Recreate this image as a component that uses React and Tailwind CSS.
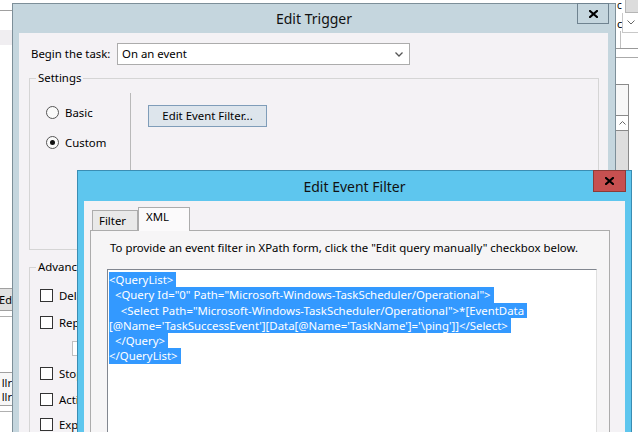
import React from "react";

/* ==========================================
   SMALL CONTROLS
========================================== */
function CloseX() {
  return (
    <svg width="9" height="8" viewBox="0 0 9 8">
      <path d="M1 1 L8 7 M8 1 L1 7" stroke="#000" strokeWidth="2.2" strokeLinecap="square" />
    </svg>
  );
}

function Radio({ checked, label }) {
  return (
    <div className="flex items-center h-[15px]">
      <span className="w-[13px] h-[13px] rounded-full border border-[#555] bg-[#fafafa] flex items-center justify-center">
        {checked && <span className="w-[5px] h-[5px] rounded-full bg-[#111]" />}
      </span>
      <span className="ml-[6px]">{label}</span>
    </div>
  );
}

function Check({ label }) {
  return (
    <div className="flex items-center h-[13px]">
      <span className="w-[13px] h-[13px] border border-[#333] bg-white shrink-0" />
      <span className="ml-[6px] whitespace-nowrap">{label}</span>
    </div>
  );
}

const xml = [
  "<QueryList>",
  "  <Query Id=\"0\" Path=\"Microsoft-Windows-TaskScheduler/Operational\">",
  "    <Select Path=\"Microsoft-Windows-TaskScheduler/Operational\">*[EventData",
  "[@Name='TaskSuccessEvent'][Data[@Name='TaskName']='\\ping']]</Select>",
  "  </Query>",
  "</QueryList>"
];

/* ==========================================
   BACKGROUND BITS (other windows behind)
========================================== */
function Backdrop() {
  return (
    <>
      {/* left strip */}
      <div className="absolute left-0 top-[10px] w-[12px] h-px bg-[#a0a0a0]" />
      <div className="absolute left-0 top-[30px] w-[12px] h-[15px] bg-[#f0eef1]" />
      <div className="absolute left-0 top-[288px] w-[12px] h-[23px] bg-[#e1e1e1] border-y border-[#a0a0a0] text-[11px] leading-[21px] overflow-hidden whitespace-nowrap flex justify-end">
        Ed
      </div>
      <div className="absolute left-0 top-[316px] w-[12px] h-px bg-[#b0b0b0]" />
      <div className="absolute left-0 top-[372px] w-[12px] h-[34px] border-y border-[#a0a0a0] bg-[#f7f7f7] text-[11px] leading-[14px] overflow-hidden flex flex-col items-end pt-[3px]">
        <span>llr</span>
        <span>llr</span>
      </div>
      <div className="absolute left-0 top-[411px] w-[12px] h-px bg-[#b0b0b0]" />

      {/* right strip */}
      <div className="absolute left-[625px] top-0 w-[13px] h-[13px] bg-[#dcdcdc] border-l border-b border-[#b5b5b5]" />
      <div className="absolute left-[617px] top-0 text-[10px] leading-[11px]">c</div>
      <div className="absolute left-[617px] top-[18px] text-[11px] leading-[12px]">c</div>
      <div className="absolute left-[622px] top-[13px] w-[16px] h-[20px] bg-white border-l border-b border-[#c8c8c8] flex items-center justify-center">
        <svg width="8" height="5" viewBox="0 0 8 5">
          <path d="M0.5 0.5 L4 4 L7.5 0.5" stroke="#666" fill="none" />
        </svg>
      </div>
      <div className="absolute left-[620px] top-[31px] w-px h-[17px] bg-[#c0c0c0]" />
      <div className="absolute left-[616px] top-[48px] w-[22px] h-px bg-[#999]" />
      <div className="absolute left-[616px] top-[57px] w-[22px] h-px bg-[#aaa]" />
      <div className="absolute left-[616px] top-[84px] w-[13px] h-[31px] border-t border-r border-[#8a8a8a] bg-[#f7f7f7]" />
      <div className="absolute left-[616px] top-[115px] w-[13px] h-[16px] border border-l-0 border-[#8a8a8a] bg-white flex items-center justify-center">
        <svg width="7" height="4" viewBox="0 0 7 4">
          <path d="M0.5 3.5 L3.5 0.5 L6.5 3.5" stroke="#666" fill="none" />
        </svg>
      </div>
      <div className="absolute left-[616px] top-[131px] w-[13px] h-[40px] border-r border-[#8a8a8a] bg-[#dedede]" />
    </>
  );
}

/* ==========================================
   EDIT TRIGGER WINDOW (inactive)
========================================== */
function EditTrigger() {
  return (
    <div className="absolute left-[12px] top-[3px] w-[604px] h-[470px] border border-[#7d8f99] bg-[#c5d6de]">
      <div className="relative h-[29px] flex items-center justify-center text-[14px] text-[#111]">
        Edit Trigger
        <div className="absolute top-[-1px] right-[6px] w-[32px] h-[21px] border border-[#6f8390] flex items-center justify-center">
          <CloseX />
        </div>
      </div>

      <div className="ml-[6px] w-[589px] h-[440px] bg-[#f4f2f5] pt-[10px]">
        <div className="flex items-center">
          <span className="pl-[12px] w-[98px]">Begin the task:</span>
          <div className="w-[293px] h-[22px] border border-[#acacac] bg-white flex items-center justify-between pl-[4px] pr-[6px]">
            <span>On an event</span>
            <svg width="8" height="5" viewBox="0 0 8 5">
              <path d="M0.5 0.5 L4 4 L7.5 0.5" stroke="#555" fill="none" strokeWidth="1.3" />
            </svg>
          </div>
        </div>

        {/* Settings group */}
        <div className="relative mt-[13px] ml-[10px] w-[570px] h-[172px] border border-[#d5d5d5]">
          <span className="absolute top-[-9px] left-[6px] px-[2px] bg-[#f4f2f5] leading-[15px]">Settings</span>
          <div className="flex">
            <div className="mt-[14px] w-[101px] h-[150px] border-r border-[#b9b9b9] pl-[16px] pt-[12px] flex flex-col gap-[15px]">
              <Radio label="Basic" />
              <Radio checked label="Custom" />
            </div>
            <div className="pl-[17px] pt-[26px]">
              <div className="w-[119px] h-[22px] bg-[#dde5ec] border border-[#7f9db9] flex items-center justify-center">
                Edit Event Filter...
              </div>
            </div>
          </div>
        </div>

        {/* Advanced settings group */}
        <div className="relative mt-[17px] ml-[10px] w-[570px] h-[200px] border border-[#d5d5d5]">
          <span className="absolute top-[-9px] left-[6px] px-[2px] bg-[#f4f2f5] leading-[15px]">Advanced settings</span>
          <div className="pl-[10px] pt-[21px] flex flex-col">
            <Check label="Delay task for up to (random delay):" />
            <div className="mt-[14px]">
              <Check label="Repeat task every:" />
            </div>
            <div className="mt-[12px] ml-[32px] w-[80px] h-[15px] border border-[#c0c0c0] bg-white" />
            <div className="mt-[11px]">
              <Check label="Stop task if it runs longer than:" />
            </div>
            <div className="mt-[13px]">
              <Check label="Activate:" />
            </div>
            <div className="mt-[12px]">
              <Check label="Expire:" />
            </div>
          </div>
        </div>
      </div>
    </div>
  );
}

/* ==========================================
   EDIT EVENT FILTER WINDOW (active)
========================================== */
function EditEventFilter() {
  return (
    <div className="absolute left-[77px] top-[170px] w-[555px] h-[300px] border border-[#3a8db3] bg-[#5ec6ee]">
      <div className="relative h-[30px] flex items-center justify-center text-[14px] text-[#111]">
        Edit Event Filter
        <div className="absolute top-[-1px] right-[5px] w-[33px] h-[22px] bg-[#c75050] border border-[#8c3b37] flex items-center justify-center">
          <CloseX />
        </div>
      </div>

      <div className="ml-[6px] w-[541px] h-[270px] bg-[#f4f2f5] pt-[6px]">
        {/* tabs */}
        <div className="flex items-end h-[24px] pl-[8px] -mb-px">
          <div className="h-[20px] mb-px px-[6px] w-[46px] bg-[#e9e9e9] border border-b-0 border-[#acacac] leading-[19px]">
            Filter
          </div>
          <div className="relative z-10 h-[24px] w-[52px] px-[7px] bg-[#fbfafb] border border-b-0 border-[#acacac] leading-[18px]">
            XML
          </div>
        </div>

        {/* panel */}
        <div className="ml-[6px] w-[520px] h-[240px] border border-[#acacac] bg-[#f6f5f6]">
          <div className="pl-[19px] pt-[9px] leading-[15px]">
            To provide an event filter in XPath form, click the "Edit query manually" checkbox below.
          </div>
          <div className="mt-[14px] ml-[16px] w-[490px] h-[200px] border border-[#828790] border-r-[#e0e0e0] bg-white p-px pt-[2px]">
            {xml.map((line, i) => (
              <div
                key={i}
                className="w-fit h-[15.3px] leading-[15.3px] whitespace-pre bg-[#3399ff] text-white pr-[3px]"
              >
                {line}
              </div>
            ))}
          </div>
        </div>
      </div>
    </div>
  );
}

/* ==========================================
   PAGE
========================================== */
export default function App() {
  return (
    <div className="relative w-[638px] h-[432px] overflow-hidden bg-white text-[11.4px] text-black font-['Segoe_UI','Noto_Sans',sans-serif]">
      <Backdrop />
      <EditTrigger />
      <EditEventFilter />
    </div>
  );
}
